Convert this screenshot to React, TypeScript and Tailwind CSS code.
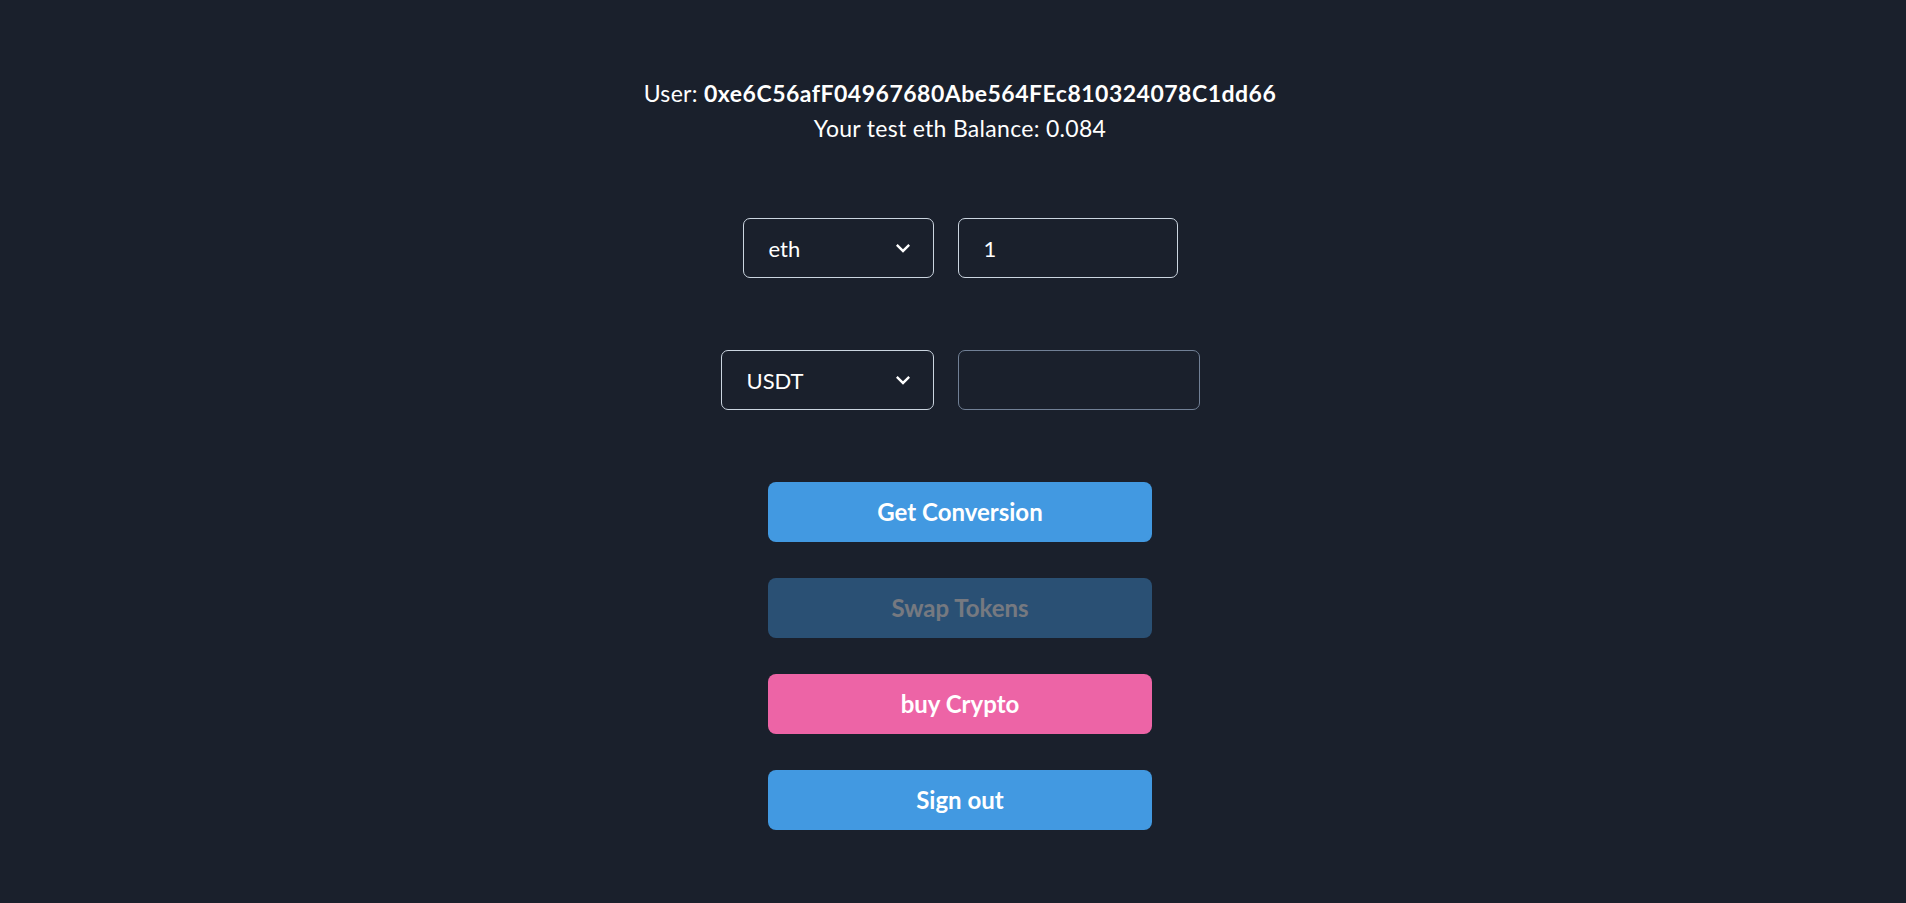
import React from "react";

function Chevron() {
  return (
    <svg viewBox="0 0 24 24" className="w-[28px] h-[28px]" fill="currentColor" aria-hidden="true">
      <path d="M16.59 8.59L12 13.17 7.41 8.59 6 10l6 6 6-6z" />
    </svg>
  );
}

function Select({ value, width }: { value: string; width: string }) {
  return (
    <div
      className={`${width} h-[60px] flex items-center justify-between rounded-[7px] border border-[#cbd5e0] pl-[25px] pr-[16px] text-[22px] text-white`}
    >
      <span>{value}</span>
      <Chevron />
    </div>
  );
}

function Input({ value, width, border }: { value: string; width: string; border: string }) {
  return (
    <div className={`${width} h-[60px] flex items-center rounded-[7px] border ${border} pl-[25px] text-[22px] text-white`}>
      <span>{value}</span>
    </div>
  );
}

function Btn({ label, color, disabled }: { label: string; color: string; disabled?: boolean }) {
  return (
    <button
      className={`w-[384px] h-[60px] rounded-[8px] ${color} ${disabled ? "opacity-40" : ""} text-white font-bold text-[24px] flex items-center justify-center`}
    >
      {label}
    </button>
  );
}

export default function App() {
  return (
    <div
      className="min-h-screen w-full bg-[#1a202c] text-white"
      style={{ fontFamily: "Lato, 'Noto Sans', sans-serif" }}
    >
      <div className="flex flex-col items-center pt-[76px] pl-[14px]">
        <div className="text-[23px] leading-[35px] tracking-[0.3px] text-center">
          <div>
            User: <span className="font-bold tracking-[0.5px]">0xe6C56afF04967680Abe564FEc810324078C1dd66</span>
          </div>
          <div>Your test eth Balance: 0.084</div>
        </div>

        <div className="mt-[72px] flex items-center gap-[24px]">
          <Select value="eth" width="w-[191px]" />
          <Input value="1" width="w-[220px]" border="border-[#cbd5e0]" />
        </div>

        <div className="mt-[72px] flex items-center gap-[24px]">
          <Select value="USDT" width="w-[213px]" />
          <Input value="" width="w-[242px]" border="border-[#718096]" />
        </div>

        <div className="mt-[72px] flex flex-col items-center gap-[36px]">
          <Btn label="Get Conversion" color="bg-[#4299e1]" />
          <Btn label="Swap Tokens" color="bg-[#4299e1]" disabled />
          <Btn label="buy Crypto" color="bg-[#ed64a6]" />
          <Btn label="Sign out" color="bg-[#4299e1]" />
        </div>
      </div>
    </div>
  );
}
